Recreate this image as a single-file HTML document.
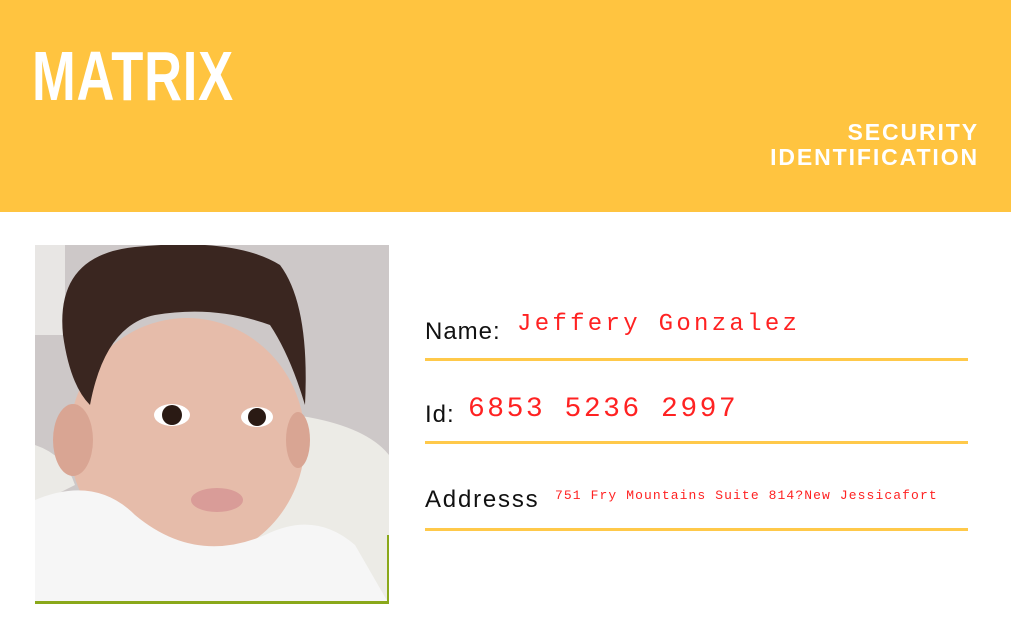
<!DOCTYPE html>
<html><head><meta charset="utf-8"><style>
html,body{margin:0;padding:0;width:1011px;height:639px;background:#fff;overflow:hidden;position:relative;font-family:"Liberation Sans",sans-serif}
.hdr{position:absolute;left:0;top:0;width:1011px;height:212px;background:#FFC440}
.logo{position:absolute;left:32px;top:36px;color:#fff;font:bold 70px/80px "Liberation Sans Narrow","Liberation Sans",sans-serif;transform:scaleX(0.75);transform-origin:left;letter-spacing:1px}
.sec{position:absolute;right:32px;top:120px;color:#fff;font:bold 23px/25px "Liberation Sans",sans-serif;text-align:right;letter-spacing:1.9px}
.photo{position:absolute;left:35px;top:245px;width:354px;height:359px}
.lbl{position:absolute;left:425px;color:#111;font:24px "Liberation Sans",sans-serif;letter-spacing:1px}
.val{position:absolute;color:#f22;font-family:"Liberation Mono",monospace;font-weight:normal}
.line{position:absolute;left:425px;width:543px;height:3px;background:#FFC94A}
</style></head><body>
<div class="hdr">
<div class="logo">MATRIX</div>
<div class="sec">SECURITY<br>IDENTIFICATION</div>
</div>
<svg class="photo" viewBox="0 0 354 359">
<rect width="354" height="359" fill="#cdc8c8"/>
<rect x="0" y="0" width="30" height="90" fill="#e8e6e4"/>
<path d="M260 170 Q330 180 354 210 L354 359 L200 359 Z" fill="#ecebe6"/>
<path d="M0 200 Q30 210 40 240 L0 260 Z" fill="#ebeae6"/>
<ellipse cx="152" cy="195" rx="118" ry="122" fill="#e6bcaa"/>
<ellipse cx="38" cy="195" rx="20" ry="36" fill="#d9a593"/>
<ellipse cx="263" cy="195" rx="12" ry="28" fill="#d9a593"/>
<path d="M28 90 Q20 10 100 2 Q200 -8 245 20 Q275 60 270 160 Q255 110 235 80 Q180 60 120 70 Q70 80 55 160 Q35 140 28 90 Z" fill="#3a2620"/>
<ellipse cx="137" cy="170" rx="18" ry="11" fill="#fff"/>
<circle cx="137" cy="170" r="10" fill="#2a1a14"/>
<ellipse cx="222" cy="172" rx="16" ry="10" fill="#fff"/>
<circle cx="222" cy="172" r="9" fill="#2a1a14"/>
<ellipse cx="182" cy="255" rx="26" ry="12" fill="#d99c98"/>
<path d="M0 255 Q60 230 100 270 Q160 320 230 290 Q280 265 320 300 L354 359 L0 359 Z" fill="#f6f6f6"/>
<rect x="0" y="356" width="354" height="3" fill="#8aa81a"/>
<rect x="352" y="290" width="2" height="69" fill="#8aa81a"/>
</svg>
<div class="lbl" style="top:318px">Name:</div>
<div class="val" style="left:517px;top:311px;font-size:24px;letter-spacing:3.3px">Jeffery Gonzalez</div>
<div class="line" style="top:358px"></div>
<div class="lbl" style="top:401px">Id:</div>
<div class="val" style="left:468px;top:394px;font-size:28px;letter-spacing:2.5px">6853 5236 2997</div>
<div class="line" style="top:441px"></div>
<div class="lbl" style="top:486px;letter-spacing:1.8px">Addresss</div>
<div class="val" style="left:555px;top:488px;font-size:13px;letter-spacing:1.1px">751 Fry Mountains Suite 814?New Jessicafort</div>
<div class="line" style="top:528px"></div>
</body></html>
